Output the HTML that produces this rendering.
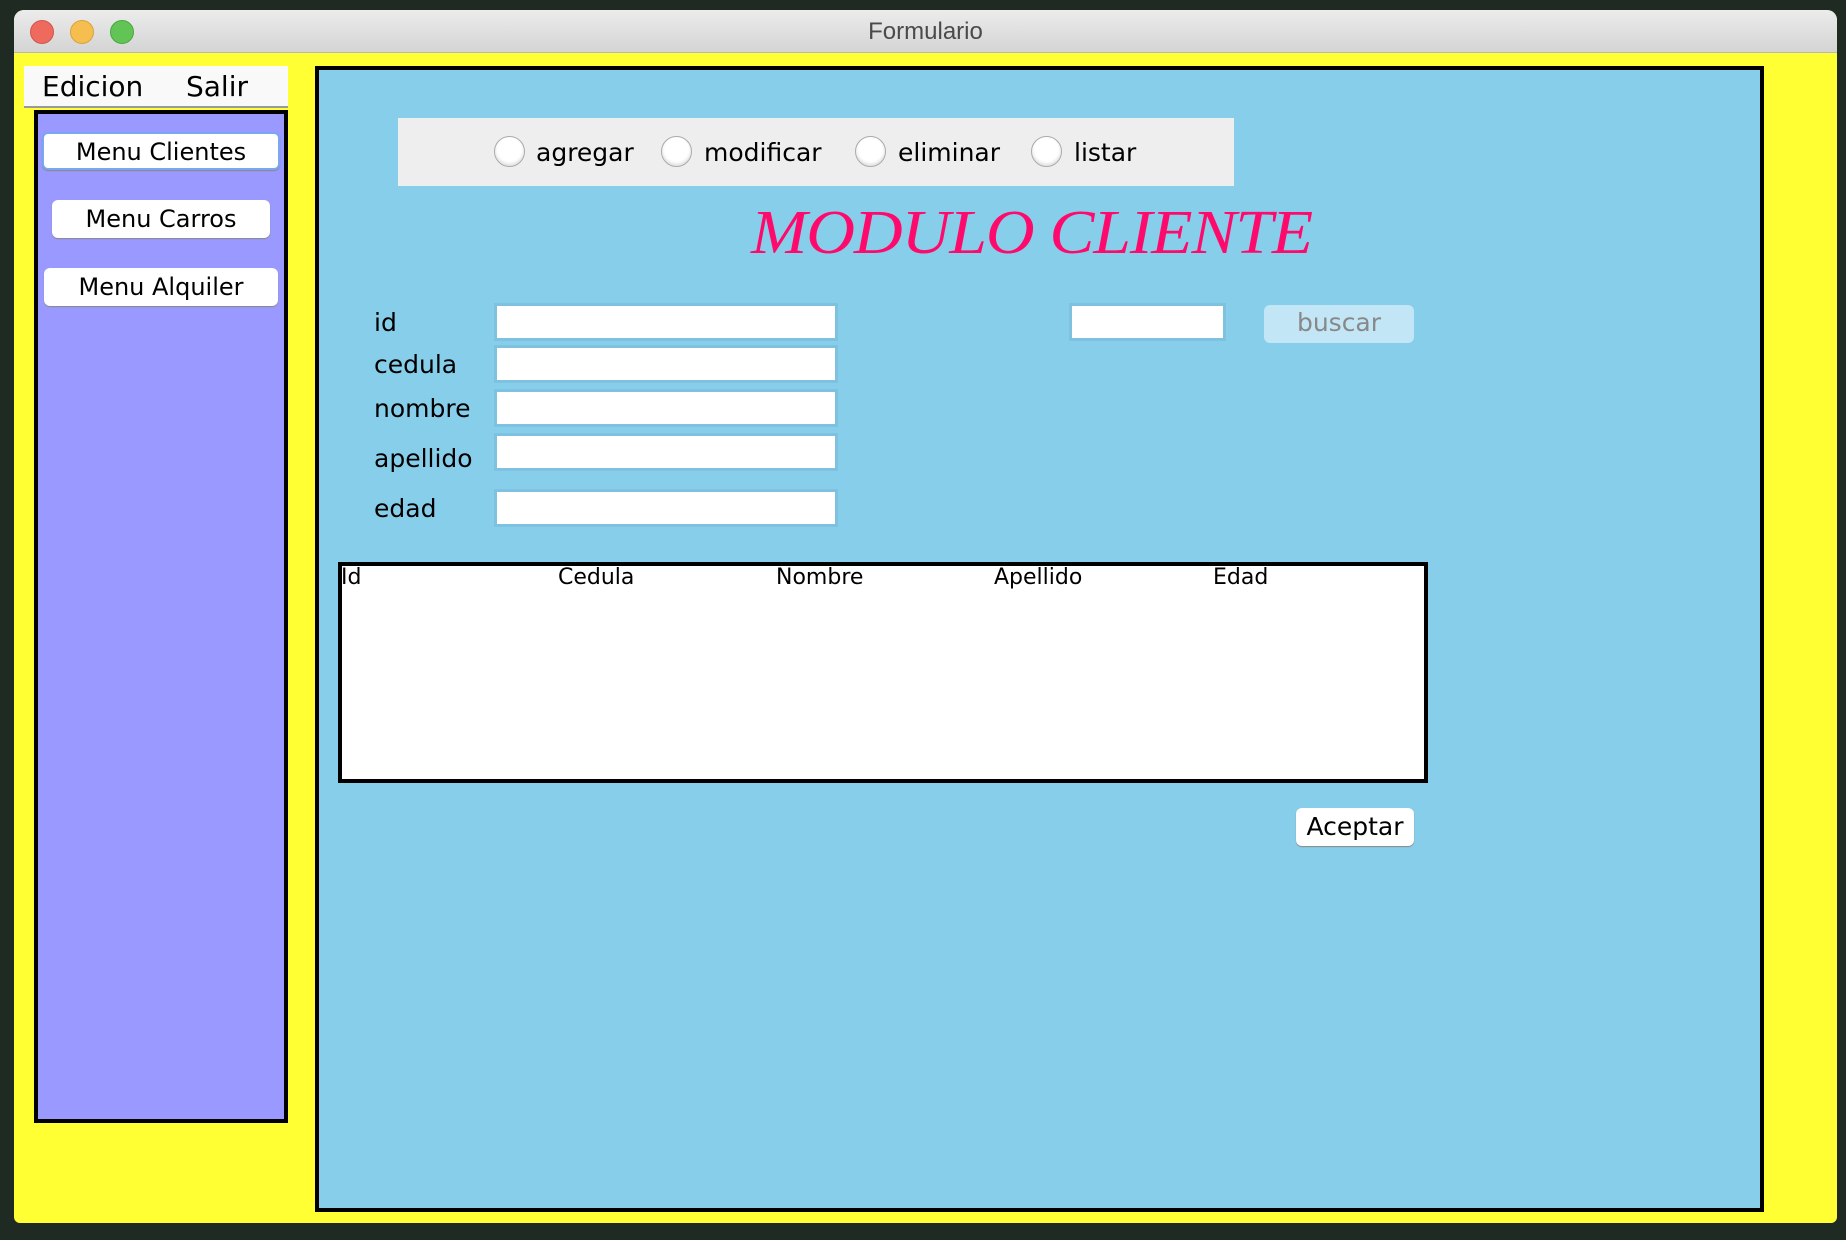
<!DOCTYPE html>
<html><head><meta charset="utf-8"><style>
*{margin:0;padding:0;box-sizing:border-box}
body{width:1846px;height:1240px;background:#1e2a22;position:relative;overflow:hidden;font-family:"DejaVu Sans","Liberation Sans",sans-serif;color:#000}
.a{position:absolute}
.win{left:14px;top:10px;width:1823px;height:1213px;background:#ffff33;border-radius:10px 10px 6px 6px;overflow:hidden}
.tb{left:14px;top:10px;width:1823px;height:43px;background:linear-gradient(#ececec,#d4d4d4);border-radius:10px 10px 0 0;border-bottom:1px solid #b8b8b8;text-align:center;font-size:24px;line-height:43px;color:#4a4a4a;font-family:"Liberation Sans",sans-serif}
.dot{width:24px;height:24px;border-radius:50%;top:20px}
.btn{background:#fff;border-radius:6px;box-shadow:0 1px 1px #888;text-align:center;font-size:24px}
.lbl{font-size:25px;left:374px}
.fld{left:494px;width:344px;height:38px;background:#fff;border:3px solid #7fc2e0}
.rad{width:31px;height:31px;border-radius:50%;background:#fff;border:1px solid #aaa;top:136px;box-shadow:inset 0 -2px 3px #ddd}
.rl{font-size:25px;top:138px}
.th{font-size:22px;top:565px}
</style></head><body>
<div class="a win"></div>
<div class="a tb">Formulario</div>
<div class="a dot" style="left:30px;background:#ee6a5f;border:1px solid #d05548"></div>
<div class="a dot" style="left:70px;background:#f5be4f;border:1px solid #d9a23a"></div>
<div class="a dot" style="left:110px;background:#61c454;border:1px solid #4ba63f"></div>

<div class="a" style="left:24px;top:66px;width:264px;height:42px;background:#f9f9f9;border-bottom:2px solid #999"></div>
<div class="a" style="left:42px;top:70px;font-size:28px">Edicion</div>
<div class="a" style="left:186px;top:70px;font-size:28px">Salir</div>

<div class="a" style="left:34px;top:110px;width:254px;height:1013px;background:#9999ff;border:4px solid #000"></div>
<div class="a btn" style="left:42px;top:132px;width:238px;height:38px;line-height:36px;border:2px solid #7aa8f0">Menu Clientes</div>
<div class="a btn" style="left:52px;top:200px;width:218px;height:38px;line-height:38px">Menu Carros</div>
<div class="a btn" style="left:44px;top:268px;width:234px;height:38px;line-height:38px">Menu Alquiler</div>

<div class="a" style="left:315px;top:66px;width:1449px;height:1146px;background:#87ceea;border:4px solid #000"></div>
<div class="a" style="left:398px;top:118px;width:836px;height:68px;background:#eeeeee"></div>
<div class="a rad" style="left:494px"></div><div class="a rl" style="left:536px">agregar</div>
<div class="a rad" style="left:661px"></div><div class="a rl" style="left:704px">modificar</div>
<div class="a rad" style="left:855px"></div><div class="a rl" style="left:898px">eliminar</div>
<div class="a rad" style="left:1031px"></div><div class="a rl" style="left:1074px">listar</div>

<div class="a" style="left:751px;top:198px;font-family:'Liberation Serif',serif;font-style:italic;font-size:62px;color:#ff0a6c;white-space:nowrap;letter-spacing:-1px;transform:scaleX(1.09);transform-origin:left top">MODULO CLIENTE</div>

<div class="a lbl" style="top:308px">id</div>
<div class="a lbl" style="top:350px">cedula</div>
<div class="a lbl" style="top:394px">nombre</div>
<div class="a lbl" style="top:444px">apellido</div>
<div class="a lbl" style="top:494px">edad</div>
<div class="a fld" style="top:303px"></div>
<div class="a fld" style="top:345px"></div>
<div class="a fld" style="top:389px"></div>
<div class="a fld" style="top:433px"></div>
<div class="a fld" style="top:489px"></div>
<div class="a fld" style="left:1069px;top:303px;width:157px"></div>
<div class="a" style="left:1264px;top:305px;width:150px;height:38px;background:#c2e6f5;border-radius:6px;text-align:center;line-height:36px;font-size:25px;color:#888">buscar</div>

<div class="a" style="left:338px;top:562px;width:1090px;height:221px;background:#fff;border:4px solid #000"></div>
<div class="a th" style="left:341px">Id</div>
<div class="a th" style="left:558px">Cedula</div>
<div class="a th" style="left:776px">Nombre</div>
<div class="a th" style="left:994px">Apellido</div>
<div class="a th" style="left:1213px">Edad</div>

<div class="a btn" style="left:1296px;top:808px;width:118px;height:38px;line-height:38px;font-size:25px">Aceptar</div>
</body></html>
